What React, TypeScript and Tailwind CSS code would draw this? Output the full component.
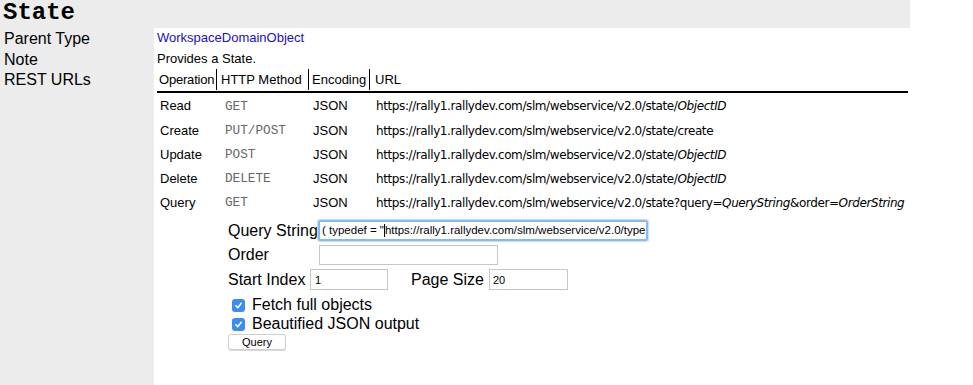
import React from "react";

const sans = { fontFamily: '"Liberation Sans", Arial, sans-serif' };

function Url({ children }: { children: React.ReactNode }) {
  return (
    <span className="text-[12px] text-black" style={{ fontFamily: '"DejaVu Sans", Verdana, sans-serif', letterSpacing: "-0.4px" }}>
      {children}
    </span>
  );
}

const rows: { op: string; method: string; url: React.ReactNode }[] = [
  { op: "Read", method: "GET", url: <>https://rally1.rallydev.com/slm/webservice/v2.0/state/<i>ObjectID</i></> },
  { op: "Create", method: "PUT/POST", url: <>https://rally1.rallydev.com/slm/webservice/v2.0/state/create</> },
  { op: "Update", method: "POST", url: <>https://rally1.rallydev.com/slm/webservice/v2.0/state/<i>ObjectID</i></> },
  { op: "Delete", method: "DELETE", url: <>https://rally1.rallydev.com/slm/webservice/v2.0/state/<i>ObjectID</i></> },
  {
    op: "Query",
    method: "GET",
    url: (
      <>
        https://rally1.rallydev.com/slm/webservice/v2.0/state?query=<i>QueryString</i>&amp;order=<i>OrderString</i>
      </>
    ),
  },
];

function Check({ label }: { label: string }) {
  return (
    <div className="flex items-center h-[19px]">
      <span className="ml-[4px] w-[13px] h-[13px] rounded-[3px] bg-[#3b8df0] flex items-center justify-center">
        <svg width="9" height="9" viewBox="0 0 10 10">
          <path d="M2 5.2 L4.2 7.4 L8 2.6" stroke="white" strokeWidth="1.7" fill="none" strokeLinecap="round" strokeLinejoin="round" />
        </svg>
      </span>
      <span className="ml-[7px] text-[16px] text-black">{label}</span>
    </div>
  );
}

export default function App() {
  return (
    <div className="w-[973px] h-[385px] bg-white overflow-hidden" style={sans}>
      <div className="w-[910px] h-[28px] bg-[#ececec] pl-[3px]">
        <div className="text-[24px] font-bold leading-[26px] text-black" style={{ fontFamily: '"Liberation Mono", "Courier New", monospace' }}>
          State
        </div>
      </div>
      <div className="flex h-[357px]">
        <div className="w-[154px] bg-[#ececec] pl-[4px] pt-[1px] text-[16px] leading-[20.5px] text-black">
          <div>Parent Type</div>
          <div>Note</div>
          <div>REST URLs</div>
        </div>
        <div className="flex-1 pl-[3px] text-[13px] text-black">
          <div className="h-[20px] pt-[2px] leading-[16px] text-[#1a0dcc]">WorkspaceDomainObject</div>
          <div className="h-[20px] pt-[3px] leading-[16px]">Provides a State.</div>
          <div className="w-[751px]">
            <div className="flex h-[25px] border-b-[2px] border-black items-center">
              <div className="w-[60px] h-[21px] flex items-center pl-[2px] border-r border-black tracking-[-0.2px]">Operation</div>
              <div className="w-[92px] h-[21px] flex items-center pl-[4px] border-r border-black">HTTP Method</div>
              <div className="w-[61px] h-[21px] flex items-center pl-[3px] border-r border-black">Encoding</div>
              <div className="flex-1 h-[21px] flex items-center pl-[5px]">URL</div>
            </div>
            <div className="pt-[1px]">
              {rows.map((r) => (
                <div key={r.op} className="flex h-[24.2px] items-center">
                  <div className="w-[60px] pl-[3px]">{r.op}</div>
                  <div className="w-[92px] pl-[8px] text-[12.7px] text-[#666]" style={{ fontFamily: '"Liberation Mono", "Courier New", monospace' }}>
                    {r.method}
                  </div>
                  <div className="w-[61px] pl-[4px]">JSON</div>
                  <div className="flex-1 pl-[6px] whitespace-nowrap">
                    <Url>{r.url}</Url>
                  </div>
                </div>
              ))}
            </div>
          </div>
          <div className="pl-[71px] pt-[4px] text-[16px]">
            <div className="flex items-center h-[24px]">
              <span className="w-[90px]">Query String</span>
              <div className="w-[330px] h-[21px] border-[2px] border-[#8ab8f0] rounded-[2px] shadow-[0_0_1px_1px_#c4dcf8] flex items-center pl-[2px] text-[11.5px] whitespace-nowrap overflow-hidden">
                {"( typedef = \""}
                <span className="inline-block w-[1px] h-[13px] bg-black" />
                https://rally1.rallydev.com/slm/webservice/v2.0/type
              </div>
            </div>
            <div className="flex items-center h-[24px]">
              <span className="w-[91px]">Order</span>
              <div className="w-[179px] h-[20px] border border-[#c6c6c6]" />
            </div>
            <div className="flex items-center h-[26px]">
              <span className="w-[82px]">Start Index</span>
              <div className="w-[78px] h-[21px] border border-[#c6c6c6] flex items-center pl-[4px] text-[11px]">1</div>
              <span className="ml-[23px] w-[78px]">Page Size</span>
              <div className="w-[79px] h-[21px] border border-[#c6c6c6] flex items-center pl-[3px] text-[11px]">20</div>
            </div>
            <div className="pt-[3px]">
              <Check label="Fetch full objects" />
              <Check label="Beautified JSON output" />
            </div>
            <div className="mt-0 w-[58px] h-[16px] border border-[#cfcfcf] rounded-[3px] bg-white shadow-[0_1px_0_#d8d8d8] flex items-center justify-center text-[11px]">
              Query
            </div>
          </div>
        </div>
      </div>
    </div>
  );
}
